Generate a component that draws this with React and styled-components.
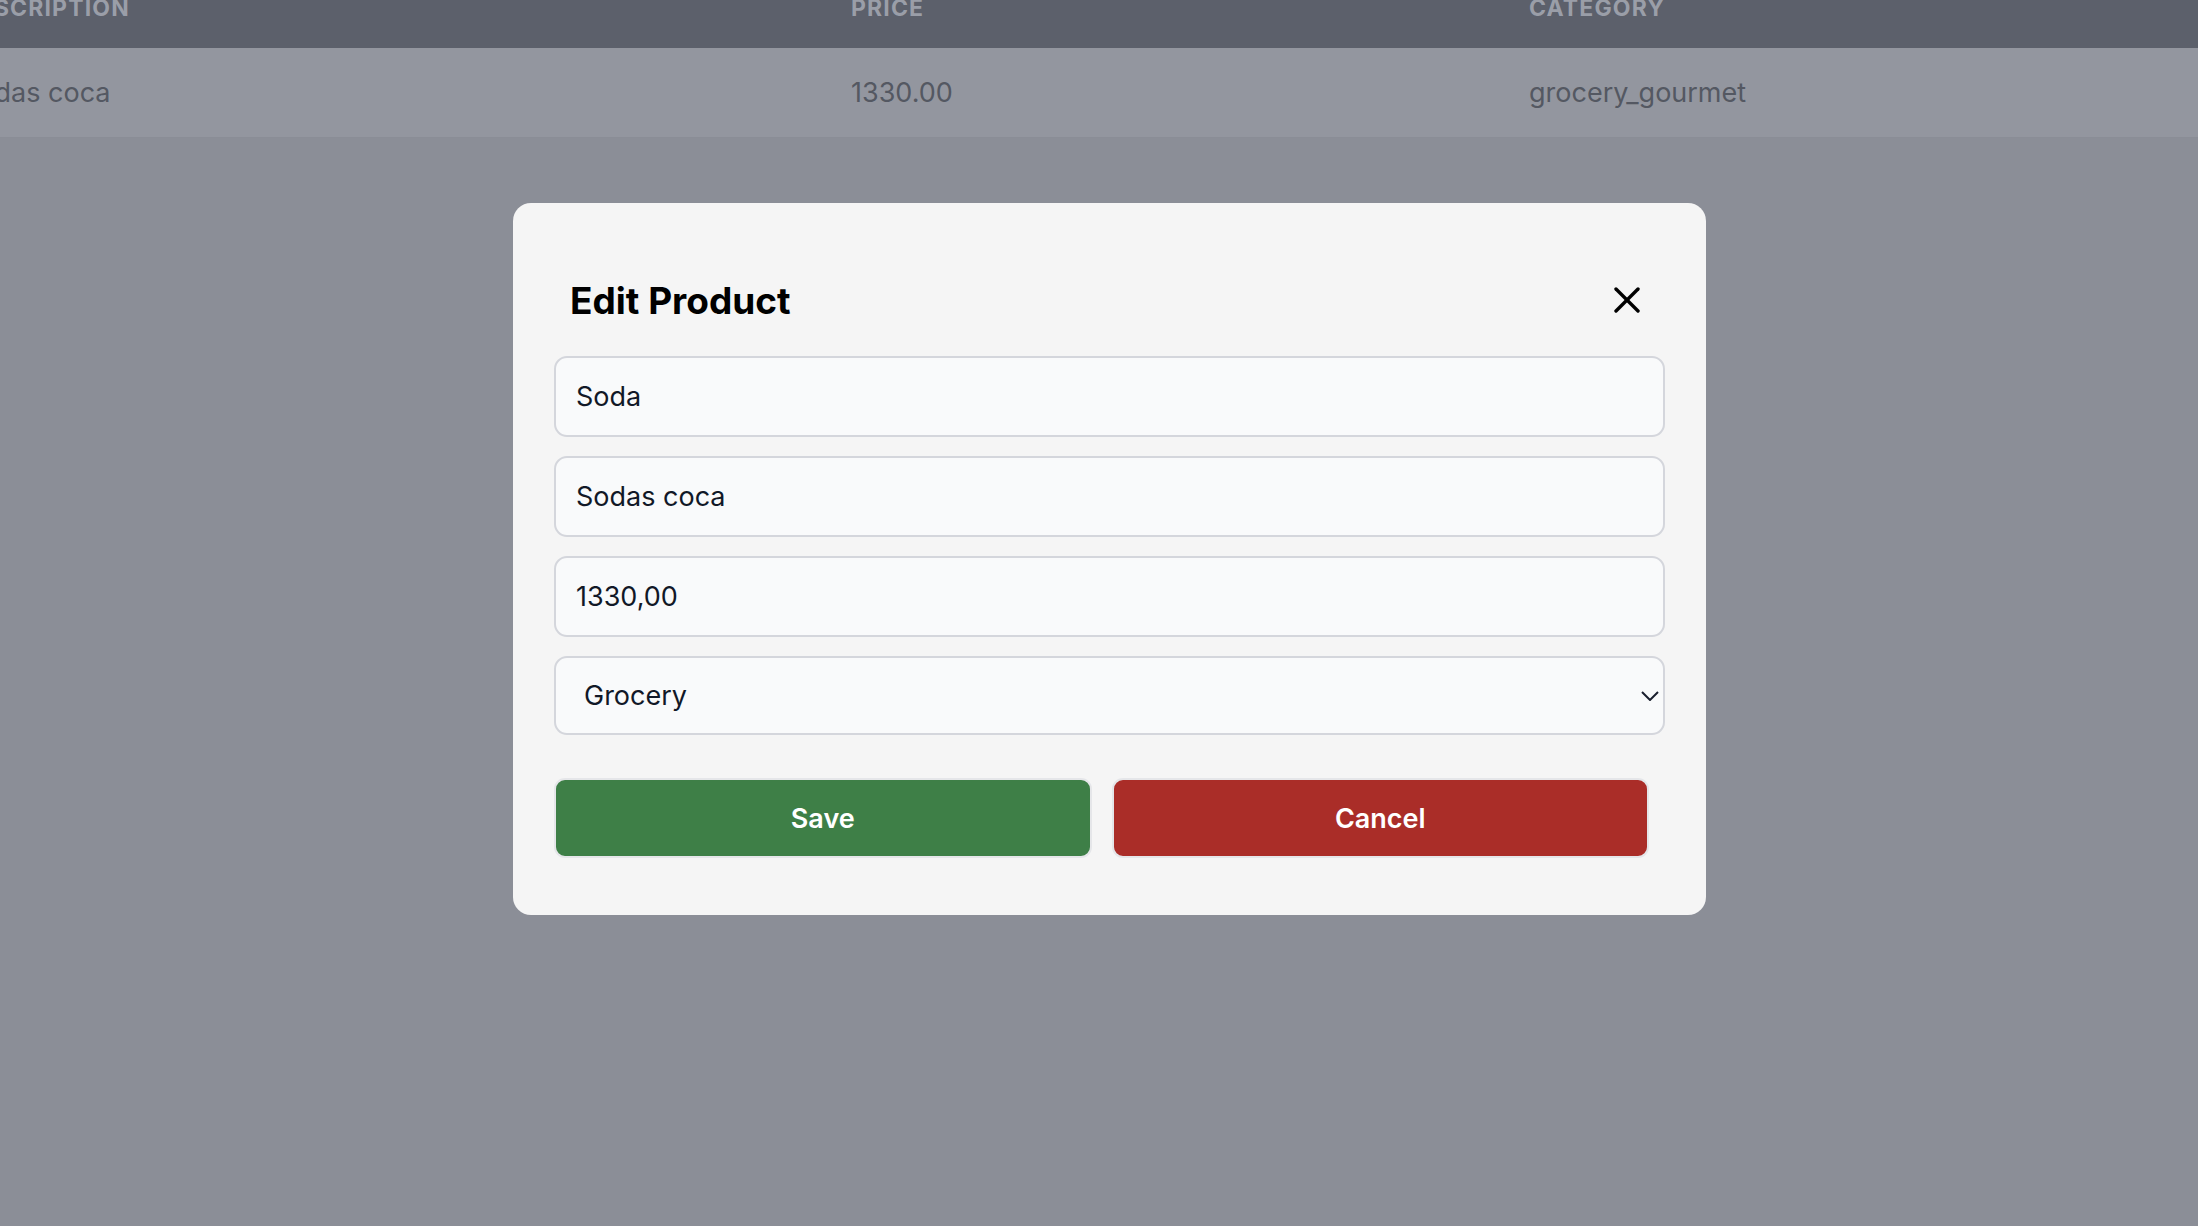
import React from 'react';
import styled, { createGlobalStyle } from 'styled-components';

// ** 상품 수정 모달 (Edit Product)

const GlobalStyle = createGlobalStyle`
  html, body {
    margin: 0;
    padding: 0;
    background-color: #8b8e97;
    font-family: Inter, "Noto Sans", "Liberation Sans", sans-serif;
    overflow: hidden;
  }
`;

const categories = [
  { value: 'grocery_gourmet', label: 'Grocery' },
  { value: 'electronics', label: 'Electronics' },
  { value: 'home_kitchen', label: 'Home & Kitchen' },
];

const App = () => {
  const product = {
    name: 'Soda',
    description: 'Sodas coca',
    price: '1330.00',
    category: 'grocery_gourmet',
  };

  return (
    <>
      <GlobalStyle />
      <Page>
        <Table>
          <HeadCell>Description</HeadCell>
          <HeadCell>Price</HeadCell>
          <HeadCell>Category</HeadCell>
          <Cell>{product.description}</Cell>
          <Cell>{product.price}</Cell>
          <Cell>{product.category}</Cell>
        </Table>
      </Page>

      <Overlay>
        <Modal>
          <Header>
            <Title>Edit Product</Title>
            <CloseBtn type="button" aria-label="close">
              <svg width="26" height="26" viewBox="0 0 26 26" fill="none" stroke="#000" strokeWidth="3.4" strokeLinecap="round">
                <line x1="2" y1="2" x2="24" y2="24" />
                <line x1="24" y1="2" x2="2" y2="24" />
              </svg>
            </CloseBtn>
          </Header>

          <Form>
            <Input type="text" defaultValue={product.name} />
            <Input type="text" defaultValue={product.description} />
            <Input type="text" defaultValue="1330,00" />
            <SelectWrap>
              <Select defaultValue={product.category}>
                {categories.map((c) => (
                  <option key={c.value} value={c.value}>{c.label}</option>
                ))}
              </Select>
              <Chevron width="18" height="10" viewBox="0 0 18 10" fill="none" stroke="#1a1f2e" strokeWidth="2">
                <polyline points="1,1 9,9 17,1" />
              </Chevron>
            </SelectWrap>

            <BtnList>
              <Button type="button" $color="#3e7f47">Save</Button>
              <Button type="button" $color="#aa2d28">Cancel</Button>
            </BtnList>
          </Form>
        </Modal>
      </Overlay>
    </>
  );
};

// styled-components
const Page = styled.div`
  width: 100%;
  min-height: 1226px;
`;

const Table = styled.div`
  display: grid;
  grid-template-columns: 890px 678px 1fr;
  margin-top: -21px;
  margin-left: -39px;
`;

const HeadCell = styled.div`
  background-color: #5c606b;
  color: #9a9ea8;
  font-size: 23px;
  font-weight: 700;
  line-height: 26px;
  letter-spacing: 0.05em;
  text-transform: uppercase;
  padding: 16px 0 27px;
`;

const Cell = styled.div`
  background-color: #93969f;
  color: #545862;
  font-size: 27px;
  line-height: 28px;
  padding: 31px 0 30px;
  border-bottom: 1px solid #8a8d96;
`;

const Overlay = styled.div`
  position: fixed;
  inset: 0;
  display: flex;
  justify-content: center;
  align-items: flex-start;
  padding: 203px 0 0 21px;
  box-sizing: border-box;
`;

const Modal = styled.div`
  width: 1193px;
  box-sizing: border-box;
  background-color: #f5f5f5;
  border-radius: 18px;
  padding: 41px 41px 57px;
`;

const Header = styled.div`
  display: flex;
  align-items: center;
  justify-content: space-between;
  height: 96px;
  box-sizing: border-box;
  padding: 16px 16px 0;
  margin-bottom: 16px;
`;

const Title = styled.h2`
  margin: 0;
  font-size: 37px;
  font-weight: 700;
  color: #000;
`;

const CloseBtn = styled.button`
  width: 44px;
  height: 44px;
  display: flex;
  align-items: center;
  justify-content: center;
  padding: 0;
  border: none;
  background: transparent;
  cursor: pointer;
`;

const Form = styled.div`
  display: flex;
  flex-direction: column;
  gap: 19px;
`;

const Input = styled.input`
  height: 81px;
  box-sizing: border-box;
  border: 2px solid #d4d6dc;
  border-radius: 13px;
  background-color: #f9fafb;
  padding: 0 20px;
  font-family: inherit;
  font-size: 27px;
  color: #111827;
  outline: none;
`;

const SelectWrap = styled.div`
  position: relative;
`;

const Select = styled.select`
  width: 100%;
  height: 79px;
  box-sizing: border-box;
  appearance: none;
  border: 2px solid #d4d6dc;
  border-radius: 13px;
  background-color: #f9fafb;
  padding: 0 28px;
  font-family: inherit;
  font-size: 27px;
  color: #111827;
  outline: none;
`;

const Chevron = styled.svg`
  position: absolute;
  right: 6px;
  top: 35px;
  pointer-events: none;
`;

const BtnList = styled.div`
  display: flex;
  gap: 20px;
  padding-right: 16px;
  margin-top: 24px;
`;

const Button = styled.button`
  flex: 1;
  height: 80px;
  border: 2px solid #e5e6e9;
  border-radius: 11px;
  background-color: ${(p) => p.$color};
  color: #fff;
  font-family: inherit;
  font-size: 27px;
  font-weight: 600;
  cursor: pointer;
`;

export default App;
